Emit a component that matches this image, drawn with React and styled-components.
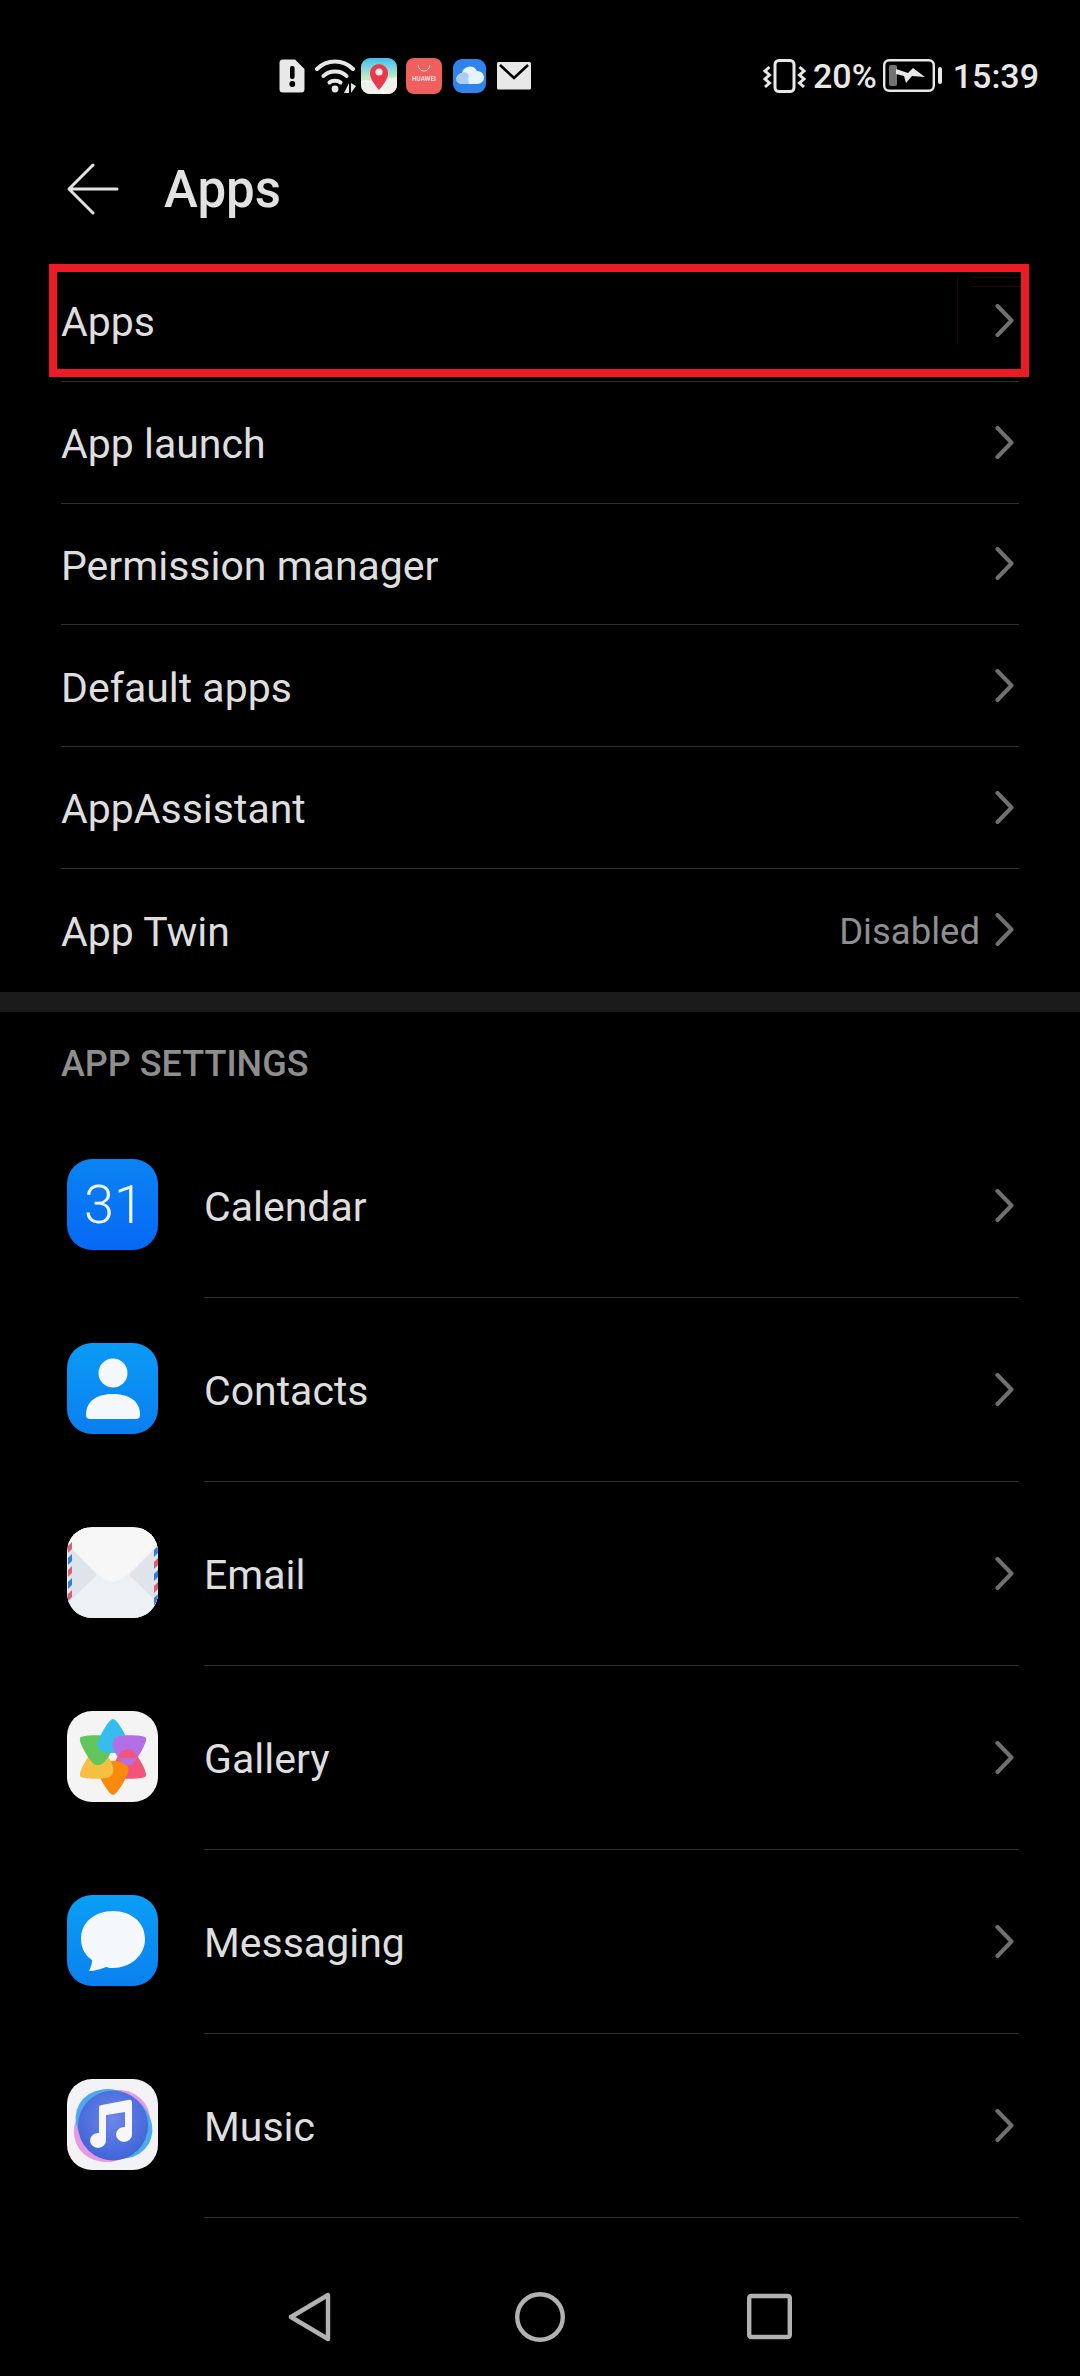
import React from "react";
import styled, { createGlobalStyle } from "styled-components";

const Global = createGlobalStyle`
  html, body { margin: 0; padding: 0; background: #000; }
  body { font-family: Roboto, "Noto Sans", sans-serif; color: #e2e2e2; }
  * { box-sizing: border-box; }
`;

const Screen = styled.div`
  width: 1080px; height: 2376px; background: #000; overflow: hidden;
  display: flex; flex-direction: column;
`;
const StatusBar = styled.div`
  height: 112px; flex: none; display: flex; align-items: flex-start; justify-content: space-between;
  padding: 58px 41px 0 279px;
`;
const StatusGroup = styled.div`
  display: flex; align-items: center; height: 36px; gap: ${p => p.$gap || 0}px;
`;
const StatusText = styled.span`
  font-size: 34px; font-weight: 500; color: #e8e8e8; line-height: 36px; margin-left: ${p => p.$ml || 0}px;
`;
const Glyph = styled.svg`
  display: block; flex: none; margin-left: ${p => p.$ml || 0}px;
`;
const Header = styled.header`
  height: 148px; flex: none; display: flex; align-items: center; padding: 5px 0 0 65px;
`;
const Title = styled.h1`
  margin: 3px 0 0 45px; font-size: 51px; font-weight: 500; color: #e2e2e2; line-height: 60px;
`;
const Row = styled.div`
  position: relative; height: 121.75px; flex: none; margin: 0 61px;
  display: flex; align-items: center; justify-content: space-between;
  border-bottom: ${p => p.$last ? "none" : "1.5px solid #2f2f2f"};
`;
const RowLabel = styled.span`
  font-size: 41px; font-weight: 400; color: #dedede; line-height: 50px; padding-top: 4px;
`;
const RowRight = styled.span`
  display: flex; align-items: center; gap: 15px; padding-right: 5px;
`;
const RowValue = styled.span`
  font-size: 36.5px; color: #8f8f8f; line-height: 44px; padding-top: 4px;
`;
const Highlight = styled.div`
  position: absolute; left: -12px; right: -10px; top: 4px; height: 113px;
  border: 8px solid #ed1c24; pointer-events: none;
`;
const Ghost = styled.svg`
  position: absolute; right: 0; top: 5px;
`;
const Band = styled.div`
  height: 20px; flex: none; margin-top: 1px; background: #1b1b1b;
`;
const SectionTitle = styled.div`
  height: 102px; flex: none; padding: 3px 0 0 61px; display: flex; align-items: center;
  font-size: 36px; font-weight: 500; color: #8e8e8e;
`;
const AppRow = styled.div`
  height: 184px; flex: none; display: flex; align-items: center; padding-left: 67px;
`;
const AppBody = styled.div`
  flex: 1; height: 100%; margin: 0 61px 0 46px; display: flex; align-items: center; justify-content: space-between;
  border-bottom: 1.5px solid #2f2f2f; padding-right: 5px;
`;
const Tile = styled.div`
  width: 91px; height: 91px; flex: none; border-radius: 25px; overflow: hidden; margin-bottom: 2px;
  background: ${p => p.$bg}; display: flex; align-items: center; justify-content: center;
`;
const CalendarDay = styled.span`
  font-size: 54px; font-weight: 300; color: #eef6ff; line-height: 1; padding-left: 3px;
`;
const Nav = styled.nav`
  flex: 1; display: flex; align-items: flex-start; padding-top: 74px; position: relative;
`;
const NavSlot = styled.div`
  position: absolute; top: 74px; left: ${p => p.$x}px;
`;

const Chevron = () => (
  <Glyph width="19" height="33" viewBox="0 0 19 33">
    <path d="M2.5 2 L16.5 16.5 L2.5 31" fill="none" stroke="#707070" strokeWidth="4" strokeLinecap="round" strokeLinejoin="round" />
  </Glyph>
);

const AlertDoc = () => (
  <Glyph width="26" height="34" viewBox="0 0 26 34">
    <path d="M4 0.5 H16 L25.5 10 V30 Q25.5 33.5 22 33.5 H4 Q0.5 33.5 0.5 30 V4 Q0.5 0.5 4 0.5 Z" fill="#e8e8e8" />
    <rect x="11" y="7" width="4.6" height="13" rx="2" fill="#000" />
    <circle cx="13.3" cy="25" r="2.9" fill="#000" />
  </Glyph>
);
const Wifi = () => (
  <Glyph $ml={10} width="42" height="36" viewBox="0 0 42 36">
    <g fill="none" stroke="#e8e8e8" strokeWidth="4" strokeLinecap="round">
      <path d="M2 11 C 12 1, 28 1, 38 11" />
      <path d="M8.5 18 C 14 12, 26 12, 31.5 18" />
      <path d="M14.5 24.5 C 17 22, 23 22, 25.5 24.5" />
    </g>
    <circle cx="20" cy="31" r="3.4" fill="#e8e8e8" />
    <path d="M34 25 V35 H29 Z" fill="#e8e8e8" />
    <path d="M36 25 V35 L41 28 Z" fill="#e8e8e8" />
  </Glyph>
);
const MapsIcon = () => (
  <Glyph $ml={4} width="36" height="36" viewBox="0 0 36 36">
    <defs>
      <clipPath id="mapclip"><rect width="36" height="36" rx="9" /></clipPath>
      <linearGradient id="mapsky" x1="0" y1="0" x2="0" y2="1">
        <stop offset="0" stopColor="#3ec0f2" />
        <stop offset="0.55" stopColor="#c6ecc8" />
        <stop offset="1" stopColor="#e9f1d8" />
      </linearGradient>
    </defs>
    <g clipPath="url(#mapclip)">
      <rect width="36" height="36" fill="url(#mapsky)" />
      <path d="M0 26 L36 19 V36 H0 Z" fill="#f1f1ec" />
      <path d="M0 24 Q12 21 20 32 L24 36" fill="none" stroke="#fff" strokeWidth="2" />
      <path d="M18 32 C 12 25, 9 20, 9 15 A 9 9 0 0 1 27 15 C 27 20, 24 25, 18 32 Z" fill="#e8394d" />
      <circle cx="18" cy="14" r="3.6" fill="#f6e9e9" />
    </g>
  </Glyph>
);
const StoreIcon = () => (
  <Glyph $ml={9} width="36" height="36" viewBox="0 0 36 36">
    <rect width="36" height="36" rx="8" fill="#ee5f5e" />
    <path d="M12 7 Q13 13 18 13 Q23 13 24 7" fill="none" stroke="#f9d9d6" strokeWidth="1" />
    <text x="18" y="23" textAnchor="middle" fontFamily="Roboto, sans-serif" fontWeight="700" fontSize="6.4" fill="#f9d9d6">HUAWEI</text>
  </Glyph>
);
const CloudIcon = () => (
  <Glyph $ml={11} width="33" height="34" viewBox="0 0 33 34">
    <rect width="33" height="34" rx="9" fill="#2f83ea" />
    <path d="M10 25 a5.5 5.5 0 0 1 -1 -11 a8 8 0 0 1 15 -2 a6.5 6.5 0 0 1 1 13 Z" fill="#e6f2fd" />
    <path d="M8 25 a5 5 0 0 1 0 -10 a4 4 0 0 1 7 5 l1 5 Z" fill="#a9cdf5" />
  </Glyph>
);
const MailIcon = () => (
  <Glyph $ml={11} width="34" height="28" viewBox="0 0 34 28">
    <rect width="34" height="27.5" rx="1.5" fill="#e8e8e8" />
    <path d="M3 3 L17 16 L31 3" fill="none" stroke="#000" strokeWidth="2.6" />
  </Glyph>
);
const Vibrate = () => (
  <Glyph width="43" height="34" viewBox="0 0 43 34">
    <rect x="12" y="1.5" width="19" height="31" rx="4" fill="none" stroke="#e8e8e8" strokeWidth="3" />
    <path d="M6.5 8 L2 12 L6.5 16 L2 20 L6.5 24 L2 28" fill="none" stroke="#e8e8e8" strokeWidth="3" />
    <path d="M36.5 8 L41 12 L36.5 16 L41 20 L36.5 24 L41 28" fill="none" stroke="#e8e8e8" strokeWidth="3" />
  </Glyph>
);
const Battery = () => (
  <Glyph $ml={6} width="61" height="34" viewBox="0 0 61 34">
    <rect x="1.2" y="1.2" width="49.6" height="30.6" rx="5" fill="none" stroke="#e8e8e8" strokeWidth="2.4" />
    <rect x="6" y="6" width="8" height="21" rx="2" fill="#737373" />
    <path d="M13 10 L25 14 L30 9 L42 18 L29 17 L23 24 L21 17 L13 15 Z" fill="#e8e8e8" />
    <rect x="55" y="8" width="4" height="17" rx="2" fill="#e8e8e8" />
  </Glyph>
);

const BackArrow = () => (
  <Glyph width="54" height="54" viewBox="0 0 54 54">
    <path d="M28 3 L4 27 L28 51 M4 27 H52" fill="none" stroke="#e2e2e2" strokeWidth="3" strokeLinecap="round" strokeLinejoin="round" />
  </Glyph>
);

const ContactsArt = () => (
  <Glyph width="90" height="90" viewBox="0 0 90 90">
    <circle cx="45" cy="29" r="14.5" fill="#f4f8fc" />
    <path d="M18 71 C 18 56, 30 50, 45 50 C 60 50, 72 56, 72 71 Q72 75 68 75 H22 Q18 75 18 71 Z" fill="#f4f8fc" />
  </Glyph>
);
const EmailArt = () => {
  const left = ["#d9607a", "#2f7fe0", "#d9607a", "#2f7fe0", "#d9607a"];
  const right = ["#2f7fe0", "#d9607a", "#2f7fe0", "#d9607a", "#2f7fe0"];
  return (
    <Glyph width="90" height="90" viewBox="0 0 90 90">
      <rect width="90" height="90" fill="#eef1f4" />
      <path d="M0 17 L29 47 L0 75 Z M90 17 L61 47 L90 75 Z" fill="#dfe4ea" />
      <path d="M0 0 H90 V17 L55 50 Q45 57 35 50 L0 17 Z" fill="#f7f7f7" />
      {left.map((c, i) => <path key={i} d={`M0 ${18 + i * 12} l4 -4 v7 l-4 4 Z`} fill={c} />)}
      {right.map((c, i) => <path key={i} d={`M90 ${18 + i * 12} l-4 4 v7 l4 -4 Z`} fill={c} />)}
    </Glyph>
  );
};
const petal = "M45 7 C 49 7, 60 26, 60.5 32 C 61 39, 54 41, 45 41 C 36 41, 29.5 39, 29.5 32 C 30 26, 41 7, 45 7 Z";
const GalleryArt = () => (
  <Glyph width="90" height="90" viewBox="0 0 90 90">
    <defs>
      <clipPath id="pinkover"><rect x="45" y="0" width="45" height="46" /></clipPath>
    </defs>
    {[
      [120, "#f2547c"], [180, "#f98a0e"], [240, "#f5bf42"], [300, "#62c65c"], [0, "#35bdf0"], [60, "#b36fe6"],
    ].map(([r, c]) => <path key={r} d={petal} fill={c} transform={`rotate(${r} 45 45)`} />)}
    <g clipPath="url(#pinkover)">
      <path d={petal} fill="#f2547c" transform="rotate(120 45 45)" />
    </g>
  </Glyph>
);
const MessagingArt = () => (
  <Glyph width="90" height="90" viewBox="0 0 90 90">
    <path d="M45 15 C 27 15, 13 26, 13 43 C 13 53, 18 60, 24 64 C 24 68, 23 71, 21 75 C 27 75, 33 73, 38 71 C 41 72, 43 72, 45 72 C 62 72, 77 60, 77 43 C 77 26, 63 15, 45 15 Z" fill="#f5f8fb" />
  </Glyph>
);
const MusicArt = () => (
  <Glyph width="90" height="90" viewBox="0 0 90 90">
    <defs>
      <radialGradient id="musicfill" cx="0.5" cy="0.4" r="0.6">
        <stop offset="0" stopColor="#6f86ea" />
        <stop offset="1" stopColor="#3f64d8" />
      </radialGradient>
    </defs>
    <ellipse cx="44" cy="46" rx="40" ry="34" fill="#e59ae3" transform="rotate(-35 44 46)" />
    <ellipse cx="46" cy="44" rx="40" ry="33" fill="#50a9ec" transform="rotate(30 46 44)" />
    <circle cx="45" cy="45.5" r="35" fill="url(#musicfill)" />
    <path d="M31 28 Q31 25 34 25 L60 20 Q64 19 64 23 V54 A 8 7.5 0 1 1 57 47 V32 L38 35 V60 A 8 7.5 0 1 1 31 53 Z" fill="#f7f7fb" />
  </Glyph>
);

const topRows = ["Apps", "App launch", "Permission manager", "Default apps", "AppAssistant", "App Twin"];
const apps = [
  { name: "Calendar", bg: "linear-gradient(#0b84f3,#0668f5)", art: <CalendarDay>31</CalendarDay> },
  { name: "Contacts", bg: "linear-gradient(#0a9bf5,#0a7ff0)", art: <ContactsArt /> },
  { name: "Email", bg: "#eef1f4", art: <EmailArt /> },
  { name: "Gallery", bg: "#f4f4f5", art: <GalleryArt /> },
  { name: "Messaging", bg: "linear-gradient(#0a9ff5,#0a80ee)", art: <MessagingArt /> },
  { name: "Music", bg: "#f3f3f5", art: <MusicArt /> },
];

export default function App() {
  return (
    <Screen>
      <Global />
      <StatusBar>
        <StatusGroup>
          <AlertDoc /><Wifi /><MapsIcon /><StoreIcon /><CloudIcon /><MailIcon />
        </StatusGroup>
        <StatusGroup>
          <Vibrate />
          <StatusText $ml={7}>20%</StatusText>
          <Battery />
          <StatusText $ml={9}>15:39</StatusText>
        </StatusGroup>
      </StatusBar>
      <Header>
        <BackArrow />
        <Title>Apps</Title>
      </Header>
      {topRows.map((label, i) => (
        <Row key={label} $last={i === topRows.length - 1}>
          <RowLabel>{label}</RowLabel>
          <RowRight>
            {label === "App Twin" && <RowValue>Disabled</RowValue>}
            <Chevron />
          </RowRight>
          {i === 0 && (
            <Highlight>
              <Ghost width="64" height="70" viewBox="0 0 64 70">
                <path d="M0.5 0 V66 M14 0.5 H64 M14 9.5 H64" fill="none" stroke="#2a0506" strokeWidth="1" />
              </Ghost>
            </Highlight>
          )}
        </Row>
      ))}
      <Band />
      <SectionTitle>APP SETTINGS</SectionTitle>
      {apps.map(a => (
        <AppRow key={a.name}>
          <Tile $bg={a.bg}>{a.art}</Tile>
          <AppBody>
            <RowLabel>{a.name}</RowLabel>
            <Chevron />
          </AppBody>
        </AppRow>
      ))}
      <Nav>
        <NavSlot $x={288}>
          <Glyph width="44" height="50" viewBox="0 0 44 50">
            <path d="M40 3 V47 L3 25 Z" fill="none" stroke="#b2b2b2" strokeWidth="4.4" strokeLinejoin="round" />
          </Glyph>
        </NavSlot>
        <NavSlot $x={515}>
          <Glyph width="50" height="50" viewBox="0 0 50 50">
            <circle cx="25" cy="25" r="22.8" fill="none" stroke="#b2b2b2" strokeWidth="4.4" />
          </Glyph>
        </NavSlot>
        <NavSlot $x={747}>
          <Glyph width="45" height="50" viewBox="0 0 45 50">
            <rect x="2.2" y="4" width="40.6" height="41" rx="2" fill="none" stroke="#b2b2b2" strokeWidth="4.4" />
          </Glyph>
        </NavSlot>
      </Nav>
    </Screen>
  );
}
